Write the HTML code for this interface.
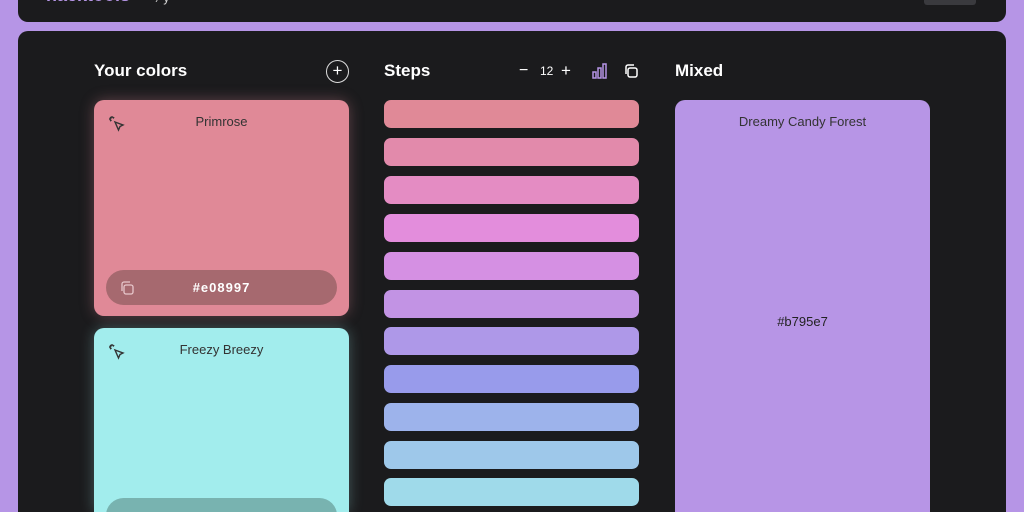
<!DOCTYPE html><html style="overflow:hidden;width:1024px;height:512px"><head><style>
body{margin:0;width:1024px;height:512px;overflow:hidden;background:#b695e6;font-family:"Liberation Sans",sans-serif;position:relative}
.top{position:absolute;left:18px;top:-20px;width:988px;height:42px;background:#1b1b1d;border-radius:10px;overflow:hidden}
.main{position:absolute;left:18px;top:31px;width:988px;height:481px;background:#1b1b1d;border-radius:10px 10px 0 0}
.h{position:absolute;top:61px;color:#fff;font-weight:bold;font-size:17px}
.card{position:absolute;left:94px;width:255px;border-radius:10px;overflow:hidden}
.name{position:absolute;top:14px;width:100%;text-align:center;font-size:13px;color:#333}
.pill{position:absolute;left:12px;width:231px;height:35px;border-radius:18px;text-align:center;line-height:35px;font-weight:bold;color:#fff;font-size:13px;letter-spacing:1px}
.bar{position:absolute;left:384px;width:255px;height:28px;border-radius:7px}
</style></head><body>
<div class="top"><div style="position:absolute;left:28px;top:5px;color:#b695e6;font-weight:bold;font-size:18px">hacktools</div><div style="position:absolute;left:140px;top:11px;color:#ddd;font-size:12px">⁄ y</div><div style="position:absolute;right:30px;top:17px;width:52px;height:8px;background:#3a3a3e;border-radius:3px"></div></div>
<div class="main"></div>
<div class="h" style="left:94px">Your colors</div>
<div style="position:absolute;left:326px;top:60px;width:21px;height:21px;border:1.5px solid #ddd;border-radius:50%;color:#fff;text-align:center;line-height:20px;font-size:17px">+</div>
<div class="h" style="left:384px">Steps</div>
<div style="position:absolute;left:519px;top:62px;color:#fff;font-size:16px">−</div>
<div style="position:absolute;left:540px;top:64px;color:#fff;font-size:12px">12</div>
<div style="position:absolute;left:561px;top:61px;color:#fff;font-size:17px">+</div>
<svg style="position:absolute;left:592px;top:63px" width="15" height="16" viewBox="0 0 15 16" fill="none" stroke="#b695e6" stroke-width="1.5"><rect x="1" y="9" width="3" height="6"/><rect x="6" y="5" width="3" height="10"/><rect x="11" y="1" width="3" height="14"/></svg>
<svg style="position:absolute;left:624px;top:64px" width="14" height="14" viewBox="0 0 14 14" fill="none" stroke="#fff" stroke-width="1.5"><rect x="4" y="4" width="9" height="9" rx="2"/><path d="M2 10V3a2 2 0 0 1 2-2h6"/></svg>
<div class="h" style="left:675px">Mixed</div>
<div class="card" style="top:100px;height:216px;background:#e08997;box-shadow:0 0 14px rgba(224,137,151,.35)">
<svg style="position:absolute;left:14px;top:15px" width="17" height="17" viewBox="0 0 17 17" fill="none" stroke="#333" stroke-width="1.4"><path d="M7 7l8 3-3 1.5L10.5 15z"/><path d="M4 1v2M1 4h2M2 2l1.5 1.5M6 2l-1 1.5M2 6l1.5-1"/></svg>
<div class="name">Primrose</div>
<div class="pill" style="top:170px;background:#a6696f">#e08997
<svg style="position:absolute;left:14px;top:11px" width="14" height="14" viewBox="0 0 14 14" fill="none" stroke="#e8c8cc" stroke-width="1.3"><rect x="4" y="4" width="9" height="9" rx="2"/><path d="M2 10V3a2 2 0 0 1 2-2h6"/></svg></div></div>
<div class="card" style="top:328px;height:184px;border-radius:10px 10px 0 0;background:#a2eded;box-shadow:0 0 14px rgba(162,237,237,.3)">
<svg style="position:absolute;left:14px;top:15px" width="17" height="17" viewBox="0 0 17 17" fill="none" stroke="#333" stroke-width="1.4"><path d="M7 7l8 3-3 1.5L10.5 15z"/><path d="M4 1v2M1 4h2M2 2l1.5 1.5M6 2l-1 1.5M2 6l1.5-1"/></svg>
<div class="name">Freezy Breezy</div>
<div class="pill" style="top:170px;background:#78b3b0"></div></div>
<div class="bar" style="top:100px;background:#e08997"></div>
<div class="bar" style="top:138px;background:#e28aab"></div>
<div class="bar" style="top:176px;background:#e48cc3"></div>
<div class="bar" style="top:214px;background:#e38ddc"></div>
<div class="bar" style="top:252px;background:#d590e3"></div>
<div class="bar" style="top:290px;background:#c293e4"></div>
<div class="bar" style="top:327px;background:#ae98e8"></div>
<div class="bar" style="top:365px;background:#989beb"></div>
<div class="bar" style="top:403px;background:#9db3eb"></div>
<div class="bar" style="top:441px;background:#9ec8ea"></div>
<div class="bar" style="top:478px;background:#9fdaea"></div>
<div class="card" style="left:675px;top:100px;height:412px;border-radius:10px 10px 0 0;background:#b795e6">
<div class="name">Dreamy Candy Forest</div>
<div style="position:absolute;top:214px;width:100%;text-align:center;font-size:13px;color:#222">#b795e7</div></div>
</body></html>
